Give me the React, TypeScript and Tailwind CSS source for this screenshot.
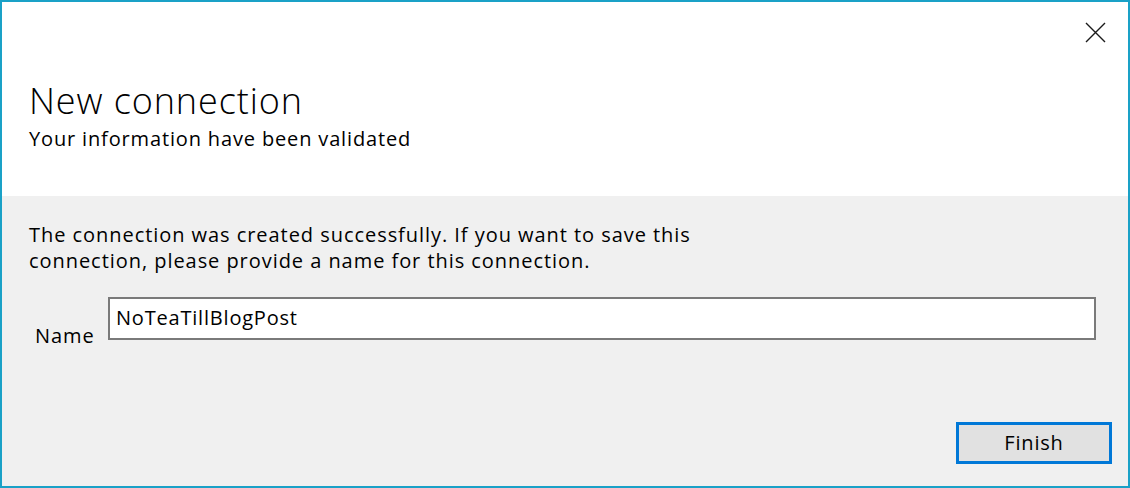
import { useState } from "react";

export default function App() {
  const [name, setName] = useState("NoTeaTillBlogPost");

  return (
    <div
      className="flex h-[488px] w-[1130px] flex-col border-2 border-[#1aa1c7] text-black"
      style={{ fontFamily: '"Open Sans", "Noto Sans", sans-serif' }}
    >
      <div className="relative h-[194px] shrink-0 bg-white pl-[27px] pt-[78px]">
        <button type="button" aria-label="Close" className="absolute right-[21px] top-[19px] flex h-[23px] w-[23px] items-center justify-center">
          <svg width="21" height="21" viewBox="0 0 21 21" fill="none">
            <path d="M1 1L20 20M20 1L1 20" stroke="#1a1a1a" strokeWidth="1.4" />
          </svg>
        </button>
        <h1 className="text-[36px] font-light leading-[42px] tracking-[0.9px]">New connection</h1>
        <p className="mt-[5px] text-[20px] leading-[24px] tracking-[0.85px]">Your information have been validated</p>
      </div>

      <div className="flex flex-1 flex-col bg-[#f0f0f0] pl-[27px] pr-[16px] pt-[26px]">
        <p className="w-[700px] text-[20px] leading-[26px] tracking-[0.95px]">
          The connection was created successfully. If you want to save this connection, please provide a name for this connection.
        </p>

        <div className="mt-[23px] flex items-start">
          <label className="mt-[27px] w-[79px] pl-[6px] text-[20px] leading-[24px] tracking-[0.9px]">Name</label>
          <input
            value={name}
            onChange={(e) => setName(e.target.value)}
            className="h-[43px] w-[988px] border-2 border-[#7a7a7a] bg-white px-[6px] pb-[3px] text-[20px] leading-[24px] tracking-[0.8px] outline-none"
          />
        </div>

        <div className="mt-auto mb-[22px] flex justify-end">
          <button
            type="button"
            className="h-[42px] w-[156px] border-[3px] border-[#0078d7] bg-[#e1e1e1] text-[20px] leading-[24px] tracking-[0.8px]"
          >
            Finish
          </button>
        </div>
      </div>
    </div>
  );
}
